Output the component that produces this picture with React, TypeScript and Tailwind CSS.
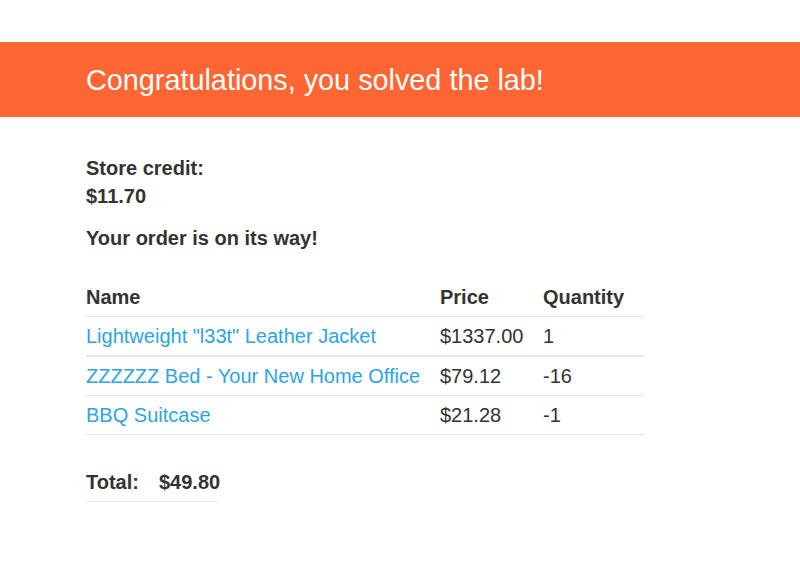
import React from "react";

const rows = [
  { name: 'Lightweight "l33t" Leather Jacket', price: "$1337.00", qty: "1" },
  { name: "ZZZZZZ Bed - Your New Home Office", price: "$79.12", qty: "-16" },
  { name: "BBQ Suitcase", price: "$21.28", qty: "-1" },
];

export default function App() {
  return (
    <div className="min-h-[587px] bg-white text-[#333332] font-['Liberation_Sans',Arial,sans-serif]">
      <div className="h-[42px]" />
      <div className="h-[75px] bg-[#ff6633] flex items-center pl-[86px] pt-[1px]">
        <h4 className="text-white text-[28.8px] leading-none">Congratulations, you solved the lab!</h4>
      </div>
      <div className="pl-[86px] pt-[37px]">
        <p className="text-[20px] font-bold leading-[28px]">
          Store credit:
          <br />
          $11.70
        </p>
        <p className="text-[20px] font-bold leading-[28px] mt-[14px]">Your order is on its way!</p>
        <table className="mt-[26px] w-[558px] text-[20px] border-collapse">
          <tbody>
            <tr className="border-b border-[#e6e6e6] h-[38px]">
              <th className="text-left font-bold w-[354px] p-0">Name</th>
              <th className="text-left font-bold w-[103px] p-0">Price</th>
              <th className="text-left font-bold p-0">Quantity</th>
            </tr>
            {rows.map((r, i) => (
              <tr
                key={i}
                className={
                  i === 0
                    ? "border-b-2 border-[#e6e6e6] h-[40px]"
                    : "border-b border-[#e6e6e6] h-[39px]"
                }
              >
                <td className="p-0 text-[#2ea4e3]">{r.name}</td>
                <td className="p-0">{r.price}</td>
                <td className="p-0">{r.qty}</td>
              </tr>
            ))}
          </tbody>
        </table>
        <table className="mt-[28px] w-[132px] table-fixed text-[20px] border-collapse">
          <tbody>
            <tr className="border-b border-[#e6e6e6] h-[39px]">
              <th className="text-left font-bold p-0 w-[73px] whitespace-nowrap">Total:</th>
              <th className="text-left font-bold p-0 w-[59px] whitespace-nowrap">$49.80</th>
            </tr>
          </tbody>
        </table>
      </div>
    </div>
  );
}
